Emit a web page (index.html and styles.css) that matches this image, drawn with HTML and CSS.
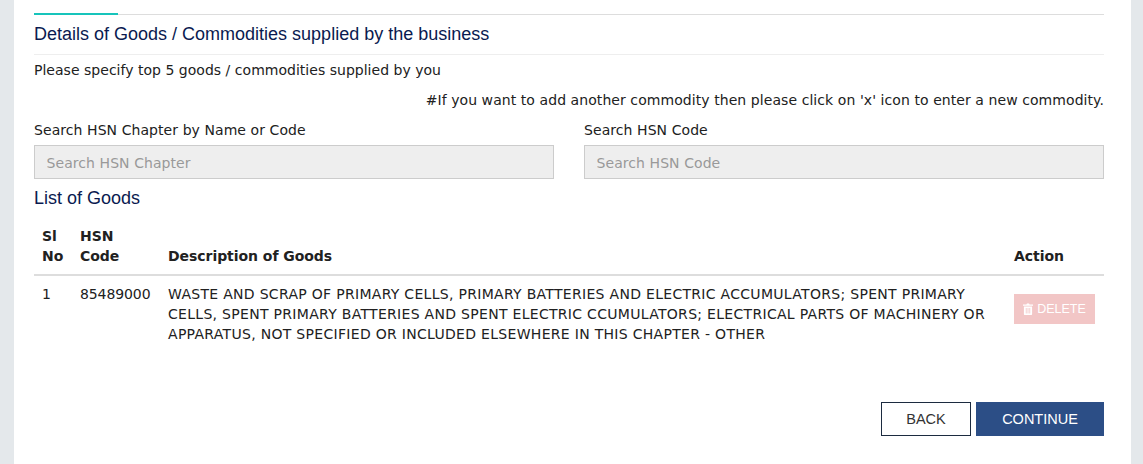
FILE: index.html
```html
<!DOCTYPE html>
<html lang="en">
<head>
    <meta charset="UTF-8">
    <title>Details of Goods</title>
    <link rel="stylesheet" href="styles.css">
</head>
<body>
    <div class="page">
        <div class="tab-rule"><span class="tab-mark"></span></div>
        <h4 class="section-title">Details of Goods / Commodities supplied by the business</h4>
        <p class="hint">Please specify top 5 goods / commodities supplied by you</p>
        <p class="note">#If you want to add another commodity then please click on 'x' icon to enter a new commodity.</p>

        <div class="search-row">
            <div class="field">
                <label for="chapter">Search HSN Chapter by Name or Code</label>
                <input id="chapter" type="text" placeholder="Search HSN Chapter" disabled>
            </div>
            <div class="field">
                <label for="code">Search HSN Code</label>
                <input id="code" type="text" placeholder="Search HSN Code" disabled>
            </div>
        </div>

        <h4 class="list-title">List of Goods</h4>
        <table class="goods">
            <thead>
                <tr>
                    <th class="col-sl">Sl No</th>
                    <th class="col-code">HSN Code</th>
                    <th>Description of Goods</th>
                    <th class="col-action">Action</th>
                </tr>
            </thead>
            <tbody>
                <tr>
                    <td>1</td>
                    <td>85489000</td>
                    <td class="desc">WASTE AND SCRAP OF PRIMARY CELLS, PRIMARY BATTERIES AND ELECTRIC ACCUMULATORS; SPENT PRIMARY CELLS, SPENT PRIMARY BATTERIES AND SPENT ELECTRIC CCUMULATORS; ELECTRICAL PARTS OF MACHINERY OR APPARATUS, NOT SPECIFIED OR INCLUDED ELSEWHERE IN THIS CHAPTER - OTHER</td>
                    <td>
                        <button class="btn-delete" disabled>
                            <svg class="trash" viewBox="0 0 10 12" width="10" height="12"><path d="M3.4 1.6 4 .5h2l.6 1.1H10v1.1H0V1.6zM.9 3.5h8.2V11c0 .6-.4 1-1 1H1.900c-.6 0-1-.4-1-1z M2.800 5v5.500h.8V5zM4.600 5v5.500h.8V5zM6.400 5v5.500h.8V5z" fill="#fff" fill-rule="evenodd"/></svg>
                            DELETE
                        </button>
                    </td>
                </tr>
            </tbody>
        </table>

        <div class="actions">
            <button class="btn-back">BACK</button>
            <button class="btn-continue">CONTINUE</button>
        </div>
    </div>
</body>
</html>
```

FILE: styles.css
```css
/* Base */
html, body {
    margin: 0;
    padding: 0;
    height: 100%;
    background-color: #e4e8eb;
    font-family: 'DejaVu Sans', Verdana, sans-serif;
    font-size: 14px;
    letter-spacing: 0.07px;
    color: #212121;
    overflow: hidden;
}

/* Main card */
.page {
    box-sizing: border-box;
    width: 1117px;
    height: 464px;
    margin-left: 14px;
    padding: 14px 27px 0 20px;
    background-color: #fff;
}

/* Tab rule */
.tab-rule {
    height: 1px;
    background-color: #ddd;
    position: relative;
}

.tab-mark {
    position: absolute;
    left: 0;
    top: -1px;
    width: 84px;
    height: 2px;
    background-color: #17c4bb;
}

/* Headings */
.section-title {
    margin: 0;
    padding: 9px 0 10px;
    font-family: 'Liberation Sans', Arial, sans-serif;
    font-size: 18px;
    line-height: 20px;
    font-weight: 400;
    letter-spacing: 0;
    color: #0a1a50;
    border-bottom: 1px solid #eee;
}

.list-title {
    margin: 9px 0 0;
    font-family: 'Liberation Sans', Arial, sans-serif;
    font-size: 18px;
    line-height: 20px;
    font-weight: 400;
    letter-spacing: 0;
    color: #0a1a50;
}

.hint {
    margin: 7px 0 0;
    line-height: 16px;
    letter-spacing: 0.02px;
}

.note {
    margin: 14px 0 0;
    line-height: 16px;
    text-align: right;
}

/* Search inputs */
.search-row {
    display: flex;
    gap: 30px;
    margin-top: 14px;
}

.field {
    flex: 1;
}

.field label {
    display: block;
    line-height: 16px;
    margin-bottom: 7px;
}

.field input {
    box-sizing: border-box;
    width: 100%;
    height: 34px;
    padding: 1px 12px 0 11.5px;
    font-family: inherit;
    font-size: 14px;
    letter-spacing: inherit;
    background-color: #eee;
    border: 1px solid #ccc;
    border-radius: 0;
}

.field input::placeholder {
    color: #999;
}

/* Table */
.goods {
    width: 100%;
    margin-top: 10px;
    border-collapse: collapse;
}

.goods th {
    padding: 8px;
    text-align: left;
    vertical-align: bottom;
    font-weight: 700;
    line-height: 20px;
    letter-spacing: -0.05px;
    border-bottom: 2px solid #ddd;
}

.goods td {
    padding: 8px;
    vertical-align: top;
    line-height: 20px;
    letter-spacing: -0.1px;
}

.goods td.desc {
    letter-spacing: 0.3px;
}

.col-sl { width: 22px; }
.col-code { width: 72px; }
.col-action { width: 82px; }

.btn-delete {
    display: flex;
    align-items: center;
    justify-content: center;
    gap: 4px;
    width: 81px;
    height: 30px;
    margin-top: 10px;
    padding: 0;
    font-family: 'Liberation Sans', Arial, sans-serif;
    font-size: 12.5px;
    letter-spacing: 0;
    color: #fff;
    background-color: #f2c6c6;
    border: 0;
}

/* Bottom buttons */
.actions {
    display: flex;
    justify-content: flex-end;
    gap: 5px;
    margin-top: 50px;
}

.actions button {
    box-sizing: border-box;
    height: 34px;
    font-family: 'Liberation Sans', Arial, sans-serif;
    font-size: 14.5px;
    border-radius: 0;
}

.btn-back {
    width: 90px;
    color: #333;
    background-color: #fff;
    border: 1px solid #1c2b40;
}

.btn-continue {
    width: 128px;
    color: #fff;
    background-color: #2c4e86;
    border: 1px solid #2c4e86;
}
```
